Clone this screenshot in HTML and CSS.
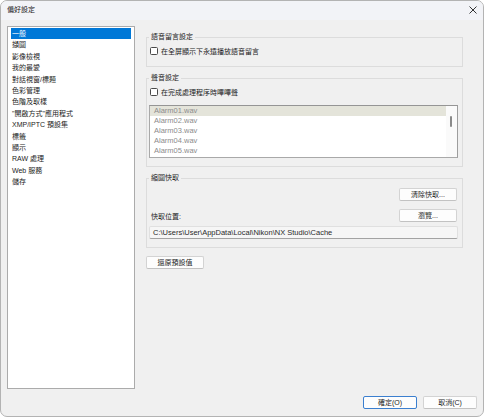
FILE: index.html
```html
<!DOCTYPE html>
<html lang="zh-Hant">
<head>
<meta charset="utf-8">
<title>偏好設定</title>
<link rel="stylesheet" href="styles.css">
</head>
<body>
<div class="window">
  <div class="titlebar">
    <span class="title">偏好設定</span>
    <svg class="close" width="8" height="8" viewBox="0 0 8 8"><path d="M0.5 0.5 L7.5 7.5 M7.5 0.5 L0.5 7.5" stroke="#333" stroke-width="1" fill="none"/></svg>
  </div>
  <div class="body">
    <div class="main">
      <ul class="nav">
        <li class="selected">一般</li>
        <li>擷圖</li>
        <li>影像檢視</li>
        <li>我的最愛</li>
        <li>對話視窗/標題</li>
        <li>色彩管理</li>
        <li>色階及取樣</li>
        <li>"開啟方式"應用程式</li>
        <li>XMP/IPTC 預設集</li>
        <li>標籤</li>
        <li>顯示</li>
        <li>RAW 處理</li>
        <li>Web 服務</li>
        <li>儲存</li>
      </ul>
      <div class="content">
        <fieldset class="group g1">
          <legend>語音留言設定</legend>
          <div class="inner">
            <label class="check"><span class="box"></span>在全屏顯示下永遠播放語音留言</label>
          </div>
        </fieldset>
        <fieldset class="group g2">
          <legend>聲音設定</legend>
          <div class="inner">
            <label class="check"><span class="box"></span>在完成處理程序時嗶嗶聲</label>
            <div class="sounds">
              <ul class="sound-list">
                <li class="sel">Alarm01.wav</li>
                <li>Alarm02.wav</li>
                <li>Alarm03.wav</li>
                <li>Alarm04.wav</li>
                <li>Alarm05.wav</li>
              </ul>
              <div class="scroll"><span class="thumb"></span></div>
            </div>
          </div>
        </fieldset>
        <fieldset class="group g3">
          <legend>縮圖快取</legend>
          <div class="inner">
            <div class="row-right"><button class="btn">清除快取...</button></div>
            <div class="row-split"><span class="lbl">快取位置:</span><button class="btn">瀏覽...</button></div>
            <div class="path">C:\Users\User\AppData\Local\Nikon\NX Studio\Cache</div>
          </div>
        </fieldset>
        <button class="btn reset">還原預設值</button>
      </div>
    </div>
    <div class="footer">
      <button class="btn default">確定(O)</button>
      <button class="btn">取消(C)</button>
    </div>
  </div>
</div>
</body>
</html>
```
FILE: styles.css
```css
* { box-sizing: border-box; }
html, body { margin: 0; padding: 0; background: #ffffff; }
body {
  font-family: "Liberation Sans", "Noto Sans CJK TC", sans-serif;
  font-size: 7px;
  color: #1c1c1c;
}
.window {
  width: 484px;
  height: 417px;
  border: 1px solid #b3b3b3;
  border-radius: 7px;
  overflow: hidden;
  display: flex;
  flex-direction: column;
  background: #f0f0f0;
}
.titlebar {
  height: 19px;
  flex: none;
  background: #f2f3f7;
  display: flex;
  align-items: center;
  justify-content: space-between;
  padding: 0 5px 1px 6px;
}
.title { font-size: 7px; line-height: 10px; color: #222; }
.close { display: block; margin-right: 1px; }
.body {
  flex: 1;
  display: flex;
  flex-direction: column;
  padding: 6px 6px 7px 6px;
}
.main {
  height: 363px;
  display: flex;
  gap: 10px;
}
.nav {
  list-style: none;
  margin: 0;
  width: 128px;
  height: 363px;
  border: 1px solid #ababab;
  background: #ffffff;
  padding: 1px 3px;
}
.nav li {
  height: 11.4px;
  line-height: 11.4px;
  padding-left: 1px;
  white-space: nowrap;
}
.nav li.selected { background: #0078d7; color: #ffffff; }
.content {
  width: 318px;
  padding-top: 6px;
  display: flex;
  flex-direction: column;
  align-items: flex-start;
}
.group {
  width: 318px;
  margin: 0 0 0 1px;
  width: 317px;
  padding: 0;
  border: 1px solid #dcdcdc;
  min-width: 0;
}
.group + .group { margin-top: 6px; }
.group legend {
  padding: 0 2px;
  margin-left: 2px;
  line-height: 10px;
  font-size: 7px;
}
.inner { display: flex; flex-direction: column; }
.g1 .inner { padding: 4px 3px 10px 3px; }
.g2 .inner { padding: 4px 3px 8px 2px; }
.g3 .inner { padding: 5px 5px 8px 2px; }
.check {
  display: flex;
  align-items: center;
  height: 10px;
  gap: 3px;
  white-space: nowrap;
}
.g2 .check { padding-left: 1px; }
.box {
  width: 8px;
  height: 8px;
  border: 1px solid #4a4a4a;
  border-radius: 1.5px;
  background: #ffffff;
  flex: none;
}
.sounds {
  margin-top: 8px;
  width: 309px;
  height: 53px;
  border: 1px solid #a9a9a9;
  border-top-color: #959595;
  border-right-color: #9d9d9d;
  background: #ffffff;
  display: flex;
}
.sound-list {
  list-style: none;
  margin: 0;
  padding: 0;
  flex: 1;
}
.sound-list li {
  height: 10px;
  line-height: 10px;
  padding-left: 4px;
  font-size: 7.5px;
  color: #8c8c8c;
}
.sound-list li.sel { background: #e4e4da; }
.scroll {
  width: 11px;
  background: #fafafa;
  position: relative;
}
.thumb {
  position: absolute;
  left: 4px;
  top: 10px;
  width: 2px;
  height: 11px;
  background: #8a8a8a;
  border-radius: 1px;
}
.btn {
  font-family: inherit;
  font-size: 7px;
  color: #1c1c1c;
  height: 13px;
  width: 58px;
  padding: 0;
  line-height: 11px;
  background: #fdfdfd;
  border: 1px solid #d3d3d3;
  border-bottom-color: #c2c2c2;
  border-radius: 2px;
}
.row-right { display: flex; justify-content: flex-end; }
.row-split {
  margin-top: 8px;
  display: flex;
  justify-content: space-between;
  align-items: flex-end;
}
.lbl { padding-left: 2px; line-height: 10px; }
.path {
  margin-top: 4px;
  width: 309px;
  height: 13px;
  line-height: 11px;
  padding-left: 3px;
  background: #f6f6f6;
  border: 1px solid #e0e0e0;
  border-bottom-color: #a3a3a3;
  border-radius: 2px;
  font-size: 7.5px;
  color: #2a2a2a;
  white-space: nowrap;
}
.reset { margin-top: 8px; margin-left: 1px; }
.footer {
  margin-top: auto;
  display: flex;
  justify-content: flex-end;
  gap: 6px;
}
.footer .btn { width: 54px; }
.btn.default { border: 1px solid #3b7fcf; }
```
